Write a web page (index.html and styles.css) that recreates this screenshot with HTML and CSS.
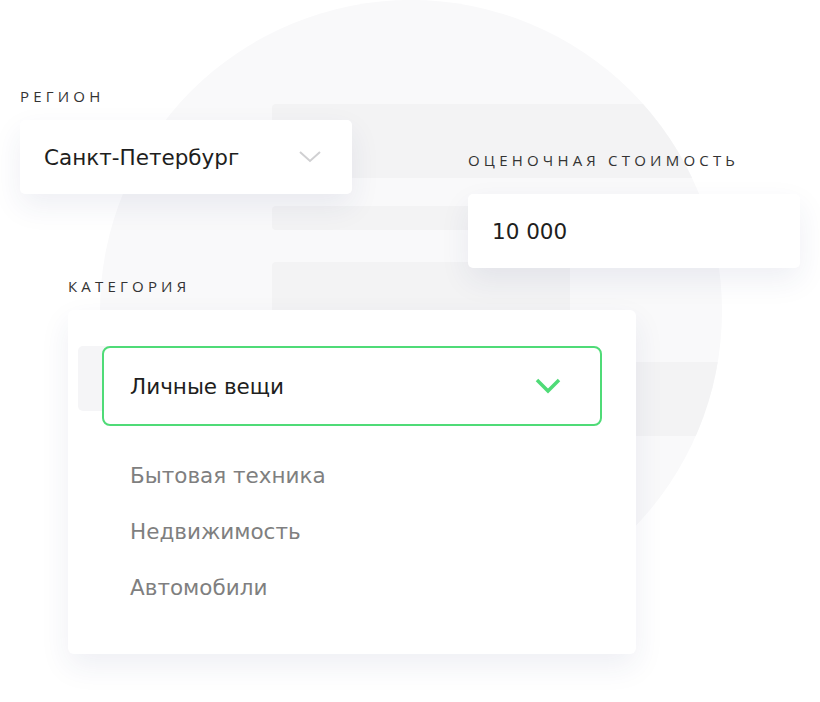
FILE: index.html
```html
<!DOCTYPE html>
<html lang="ru">
<head>
    <meta charset="UTF-8">
    <meta name="viewport" content="width=device-width, initial-scale=1.0">
    <title>Оценка имущества</title>
    <link rel="stylesheet" href="styles.css">
</head>
<body>
    <div class="stage">
        <!-- background decoration -->
        <div class="circle">
            <div class="bar bar-1"></div>
            <div class="bar bar-2"></div>
            <div class="bar bar-3"></div>
            <div class="bar bar-4"></div>
        </div>

        <div class="field field-region">
            <div class="label">Регион</div>
            <div class="card select">
                <span>Санкт-Петербург</span>
                <svg class="chevron" width="24" height="14" viewBox="0 0 24 14">
                    <path d="M2 2 L12 11 L22 2" fill="none" stroke="#d0d0d2" stroke-width="2"/>
                </svg>
            </div>
        </div>

        <div class="field field-price">
            <div class="label label-wide">Оценочная стоимость</div>
            <div class="card select">
                <span>10 000</span>
            </div>
        </div>

        <div class="field field-category">
            <div class="label">Категория</div>
            <div class="card dropdown">
                <div class="ghost"></div>
                <div class="selected">
                    <span>Личные вещи</span>
                    <svg class="chevron" width="28" height="18" viewBox="0 0 28 18">
                        <path d="M3 3 L14 14 L25 3" fill="none" stroke="#4fdb77" stroke-width="3.5"/>
                    </svg>
                </div>
                <ul class="options">
                    <li>Бытовая техника</li>
                    <li>Недвижимость</li>
                    <li>Автомобили</li>
                </ul>
            </div>
        </div>
    </div>
</body>
</html>
```

FILE: styles.css
```css
body {
    margin: 0;
    background-color: #fff;
    font-family: "DejaVu Sans", "Open Sans", sans-serif;
    color: #1e1e20;
}

.stage {
    position: relative;
    width: 820px;
    height: 702px;
    overflow: hidden;
}

.circle {
    position: absolute;
    left: 100px;
    top: 0;
    width: 622px;
    height: 622px;
    border-radius: 50%;
    background-color: #f9f9fa;
    overflow: hidden;
}

.bar {
    position: absolute;
    left: 172px;
    background-color: #f3f3f4;
    border-radius: 4px;
}

.bar-1 { top: 104px; width: 500px; height: 74px; }
.bar-2 { top: 206px; width: 300px; height: 24px; }
.bar-3 { top: 262px; width: 298px; height: 90px; }
.bar-4 { top: 362px; width: 500px; height: 74px; }

.field {
    position: absolute;
}

.field-region { left: 20px; top: 86px; width: 332px; }
.field-price { left: 468px; top: 150px; width: 332px; }
.field-category { left: 68px; top: 276px; width: 568px; }

.label {
    font-family: "Open Sans", sans-serif;
    font-size: 15px;
    letter-spacing: 4.2px;
    text-transform: uppercase;
    color: #333;
    line-height: 20px;
    margin-bottom: 14px;
}

.label-wide {
    margin-bottom: 24px;
}

.card {
    background-color: #fff;
    border-radius: 5px;
    box-shadow: 0 12px 30px rgba(40, 50, 120, 0.08);
}

.select {
    height: 74px;
    display: flex;
    align-items: center;
    justify-content: space-between;
    padding: 0 30px 0 24px;
    font-size: 21.5px;
}

.dropdown {
    position: relative;
    padding: 36px 34px 38px 34px;
    border-radius: 6px;
}

.ghost {
    position: absolute;
    left: 10px;
    top: 36px;
    width: 60px;
    height: 65px;
    border-radius: 5px;
    background-color: #f5f5f7;
}

.selected {
    position: relative;
    height: 76px;
    border: 2px solid #4fdb77;
    border-radius: 8px;
    background-color: #fff;
    display: flex;
    align-items: center;
    justify-content: space-between;
    padding: 0 38px 0 26px;
    font-size: 21.5px;
}

.options {
    list-style: none;
    margin: 22px 0 0 0;
    padding: 0 0 0 28px;
}

.options li {
    font-size: 21.5px;
    line-height: 56px;
    color: #7f7f80;
}
```
